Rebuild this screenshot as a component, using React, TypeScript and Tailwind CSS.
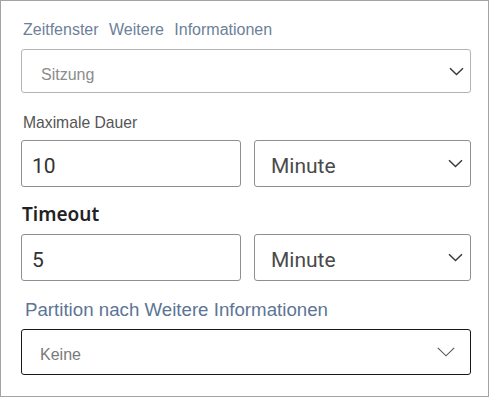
import React from "react";

const Chevron = () => (
  <svg width="15" height="9" viewBox="0 0 15 9" fill="none">
    <path d="M1 1.2 L7.5 7.5 L14 1.2" stroke="#3a3a3a" strokeWidth="1.5" />
  </svg>
);

const ThinChevron = () => (
  <svg width="18" height="10" viewBox="0 0 18 10" fill="none">
    <path d="M0.8 0.8 L9 8.8 L17.2 0.8" stroke="#555" strokeWidth="1.1" />
  </svg>
);

const ValueRow = ({ value }: { value: string }) => (
  <div className="grid grid-cols-[220px_1fr] gap-[13px] font-['Roboto','Noto_Sans',sans-serif]">
    <div className="h-[47px] border border-[#8f8f8f] rounded-[3px] flex items-center pl-[10px]">
      <span className="text-[21px] leading-[26px] text-[#333] translate-y-[2px]">{value}</span>
    </div>
    <div className="h-[47px] border border-[#8f8f8f] rounded-[3px] flex items-center justify-between pl-[16px] pr-[7px]">
      <span className="text-[21px] leading-[26px] text-[#4a4a4a] translate-y-[2px]">Minute</span>
      <Chevron />
    </div>
  </div>
);

export default function App() {
  return (
    <div className="w-[489px] h-[397px] bg-white border border-[#a3a3a3] box-border pl-[20px] pr-[17px] pt-[19px] flex flex-col font-['Liberation_Sans',Arial,sans-serif]">
      <div className="h-[20px] leading-[20px] text-[16px] text-[#6d7f99] pl-[2px] [word-spacing:6px]">
        Zeitfenster Weitere Informationen
      </div>
      <div className="mt-[9px] h-[44px] border border-[#b4b4b4] rounded-[3px] flex items-center justify-between pl-[19px] pr-[6px]">
        <span className="text-[16px] leading-[20px] text-[#8c8c8c] translate-y-[4px]">Sitzung</span>
        <Chevron />
      </div>
      <div className="mt-[20px] h-[20px] leading-[20px] text-[15.7px] text-[#555555] pl-[2px]">
        Maximale Dauer
      </div>
      <div className="mt-[7px]">
        <ValueRow value="10" />
      </div>
      <div className="mt-[15px] h-[24px] leading-[24px] text-[19px] font-semibold text-[#222] pl-[1px] font-['Noto_Sans','Open_Sans',sans-serif]">
        Timeout
      </div>
      <div className="mt-[8px]">
        <ValueRow value="5" />
      </div>
      <div className="mt-[17px] h-[24px] leading-[24px] text-[18.7px] text-[#5c7595] pl-[4px]">
        Partition nach Weitere Informationen
      </div>
      <div className="mt-[7px] h-[46px] border-[1.5px] border-[#1a1a1a] rounded-[3px] flex items-center justify-between pl-[18px] pr-[15px]">
        <span className="text-[16px] leading-[20px] text-[#7a7a7a] translate-y-[3px]">Keine</span>
        <ThinChevron />
      </div>
    </div>
  );
}
